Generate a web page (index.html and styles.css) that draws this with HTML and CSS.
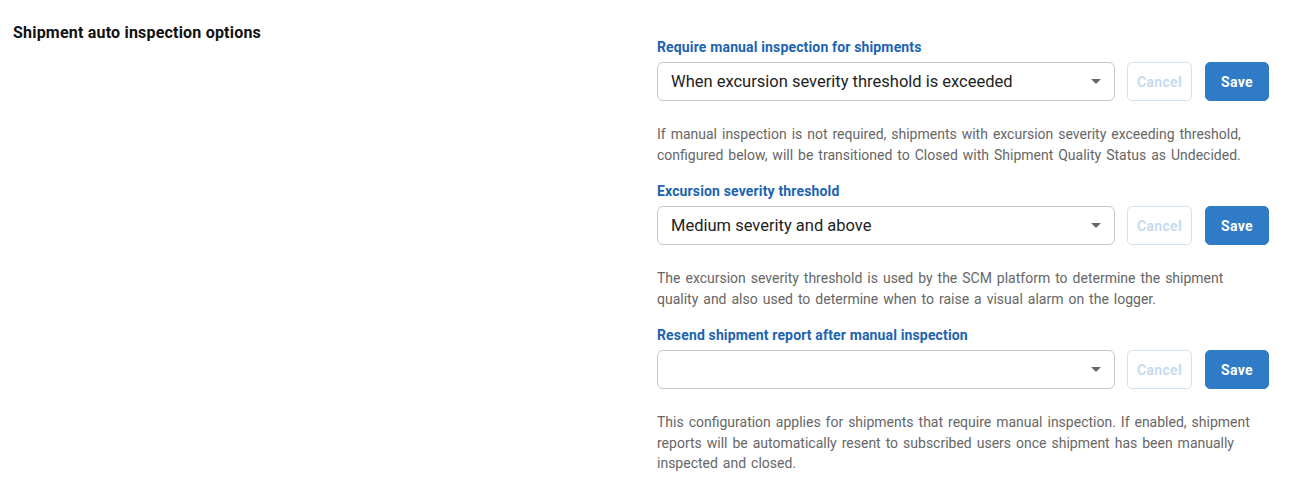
FILE: index.html
```html
<!DOCTYPE html>
<html>
<head>
<meta charset="utf-8">
<link rel="stylesheet" href="styles.css">
</head>
<body>
<div class="page">
  <div class="side">
    <h2 class="title">Shipment auto inspection options</h2>
  </div>
  <div class="main">
    <div class="field">
      <label class="label">Require manual inspection for shipments</label>
      <div class="row">
        <div class="select"><span>When excursion severity threshold is exceeded</span><i class="caret"></i></div>
        <button class="btn cancel">Cancel</button>
        <button class="btn save">Save</button>
      </div>
      <p class="help">If manual inspection is not required, shipments with excursion severity exceeding threshold, configured below, will be transitioned to Closed with Shipment Quality Status as Undecided.</p>
    </div>
    <div class="field">
      <label class="label">Excursion severity threshold</label>
      <div class="row">
        <div class="select"><span>Medium severity and above</span><i class="caret"></i></div>
        <button class="btn cancel">Cancel</button>
        <button class="btn save">Save</button>
      </div>
      <p class="help">The excursion severity threshold is used by the SCM platform to determine the shipment quality and also used to determine when to raise a visual alarm on the logger.</p>
    </div>
    <div class="field">
      <label class="label">Resend shipment report after manual inspection</label>
      <div class="row">
        <div class="select"><span></span><i class="caret"></i></div>
        <button class="btn cancel">Cancel</button>
        <button class="btn save">Save</button>
      </div>
      <p class="help">This configuration applies for shipments that require manual inspection. If enabled, shipment reports will be automatically resent to subscribed users once shipment has been manually inspected and closed.</p>
    </div>
  </div>
</div>
</body>
</html>
```

FILE: styles.css
```css
* { box-sizing: border-box; }
html, body { margin: 0; padding: 0; background: #fff; }
body { font-family: Roboto, "Liberation Sans", sans-serif; color: #222; }
.page { display: flex; padding: 24px 21px 0 13px; }
.side { width: 644px; flex: none; }
.title { margin: 0; font-size: 16px; letter-spacing: 0.2px; font-weight: 700; line-height: 18px; color: #111; }
.main { flex: 1; padding-top: 15px; }
.field { display: flex; flex-direction: column; }
.label { font-size: 14px; letter-spacing: 0.15px; font-weight: 700; color: #1b63b3; line-height: 16px; margin-bottom: 7px; }
.row { display: flex; gap: 12px; align-items: stretch; }
.select { flex: 1; height: 39px; border: 1px solid #c8c8c8; border-radius: 6px; display: flex; align-items: center; justify-content: space-between; padding: 0 13px 0 13px; font-size: 16.5px; color: #222; }
.caret { width: 0; height: 0; border-left: 5px solid transparent; border-right: 5px solid transparent; border-top: 5px solid #666; }
.btn { font-family: inherit; font-size: 14px; letter-spacing: 0.3px; font-weight: 700; border-radius: 5px; height: 39px; width: 65px; padding: 0; cursor: pointer; }
.cancel { background: #fff; border: 1px solid #d3e3f4; color: #c6dbf0; }
.save { width: 64px; background: #2f7bc5; border: 1px solid #2f7bc5; color: #fff; margin-left: 1px; }
.help { margin: 23px 0 18px; max-width: 613px; font-size: 14px; word-spacing: 1.5px; line-height: 20.5px; color: #666; }
```
